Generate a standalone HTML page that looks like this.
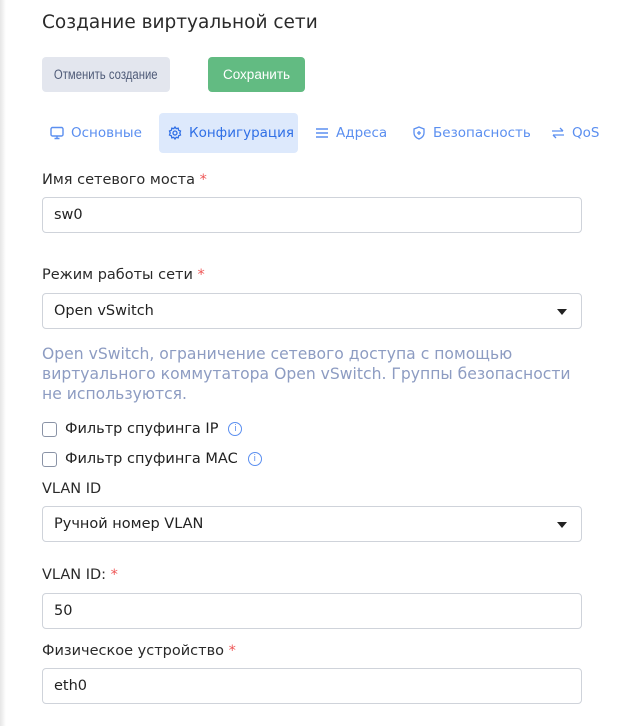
<!DOCTYPE html>
<html><head><meta charset="utf-8"><style>
*{box-sizing:border-box;margin:0;padding:0}
body{width:618px;height:726px;overflow:hidden;background:#fff;font-family:"DejaVu Sans","Liberation Sans",sans-serif;color:#222;position:relative}
.edge{position:absolute;left:0;top:0;bottom:0;width:6px;background:linear-gradient(to right,#e6e6e6,#fff)}
.abs{position:absolute}
h1{position:absolute;left:42px;top:12px;font-size:18.5px;font-weight:normal;color:#2a2a2a;white-space:nowrap}
.btn{position:absolute;top:57px;height:35px;border-radius:4px;font-size:13.5px;line-height:35px;text-align:center;white-space:nowrap;font-family:"Liberation Sans",sans-serif}
.btn span{display:inline-block}
.tab{position:absolute;top:113px;height:40px;line-height:40px;font-size:13.5px;color:#5b8ff0;display:flex;align-items:center;gap:7px;white-space:nowrap}
.lbl{position:absolute;left:42px;font-size:14.5px;color:#2a2a2a;white-space:nowrap}
.lbl b{color:#e55;font-weight:normal}
.inp{position:absolute;left:42px;width:540px;height:36px;border:1px solid #cfd3da;border-radius:4px;padding-left:11px;line-height:34px;font-size:14.5px;color:#222}
.arr{position:absolute;right:14px;top:15px;width:0;height:0;border-left:5px solid transparent;border-right:5px solid transparent;border-top:6px solid #222}
.desc{position:absolute;left:42px;top:344px;font-size:15.6px;line-height:20px;color:#8d9cc2;width:545px}
.cb{position:absolute;left:42px;font-size:14.5px;display:flex;align-items:center;color:#222;white-space:nowrap}
.cb i{width:15px;height:15px;border:1.5px solid #8a93a6;border-radius:3px;margin-right:8px;display:inline-block}
.info{margin-left:10px;width:14px;height:14px;border:1.3px solid #5b8ff0;border-radius:50%;color:#5b8ff0;font-size:9px;line-height:12px;text-align:center;font-style:normal}
</style></head><body>
<div class="edge"></div>
<h1>Создание виртуальной сети</h1>
<div class="btn" style="left:42px;width:128px;background:#e3e6ee;color:#4f5b78"><span style="transform:scaleX(0.84)">Отменить создание</span></div>
<div class="btn" style="left:208px;width:97px;background:#62bb82;color:#fff">Сохранить</div>
<div class="abs" style="left:159px;top:113px;width:139px;height:40px;background:#dde9fc;border-radius:4px"></div>
<div class="tab" style="left:50px"><svg width="14" height="14" viewBox="0 0 14 14" fill="none" stroke="#5b8ff0" stroke-width="1.4"><rect x="1" y="1.5" width="12" height="8.5" rx="1.5"/><path d="M7 10v2.5M4.5 12.5h5"/></svg>Основные</div>
<div class="tab" style="left:168px;color:#2f6fe6"><svg width="14" height="14" viewBox="0 0 14 14" fill="none" stroke="#2f6fe6" stroke-width="1.3"><circle cx="7" cy="7" r="2"/><path d="M7 1l1.2 1.6 2-.4.4 2L12.5 5l-.7 2 .7 2-1.9.8-.4 2-2-.4L7 13l-1.2-1.6-2 .4-.4-2L1.5 9l.7-2-.7-2 1.9-.8.4-2 2 .4z"/></svg>Конфигурация</div>
<div class="tab" style="left:315px"><svg width="14" height="14" viewBox="0 0 14 14" stroke="#5b8ff0" stroke-width="1.5"><path d="M1 3h12M1 7h12M1 11h12"/></svg>Адреса</div>
<div class="tab" style="left:412px"><svg width="14" height="14" viewBox="0 0 14 14" fill="none" stroke="#5b8ff0" stroke-width="1.3"><path d="M7 1l5 2v4c0 3-2.5 5-5 6-2.5-1-5-3-5-6V3z"/><path d="M7 5v4M5 7h4"/></svg>Безопасность</div>
<div class="tab" style="left:551px"><svg width="14" height="14" viewBox="0 0 14 14" fill="none" stroke="#5b8ff0" stroke-width="1.3"><path d="M1 5h11M9 2l3 3M13 9H2M5 12L2 9"/></svg>QoS</div>

<div class="lbl" style="top:172px">Имя сетевого моста <b>*</b></div>
<div class="inp" style="top:197px">sw0</div>
<div class="lbl" style="top:267px">Режим работы сети <b>*</b></div>
<div class="inp" style="top:293px">Open vSwitch<span class="arr"></span></div>
<div class="desc">Open vSwitch, ограничение сетевого доступа с помощью<br>виртуального коммутатора Open vSwitch. Группы безопасности<br>не используются.</div>
<div class="cb" style="top:421px"><i></i>Фильтр спуфинга IP<em class="info">i</em></div>
<div class="cb" style="top:451px"><i></i>Фильтр спуфинга MAC<em class="info">i</em></div>
<div class="lbl" style="top:481px">VLAN ID</div>
<div class="inp" style="top:506px">Ручной номер VLAN<span class="arr"></span></div>
<div class="lbl" style="top:567px">VLAN ID: <b>*</b></div>
<div class="inp" style="top:593px">50</div>
<div class="lbl" style="top:643px">Физическое устройство <b>*</b></div>
<div class="inp" style="top:668px">eth0</div>
</body></html>
